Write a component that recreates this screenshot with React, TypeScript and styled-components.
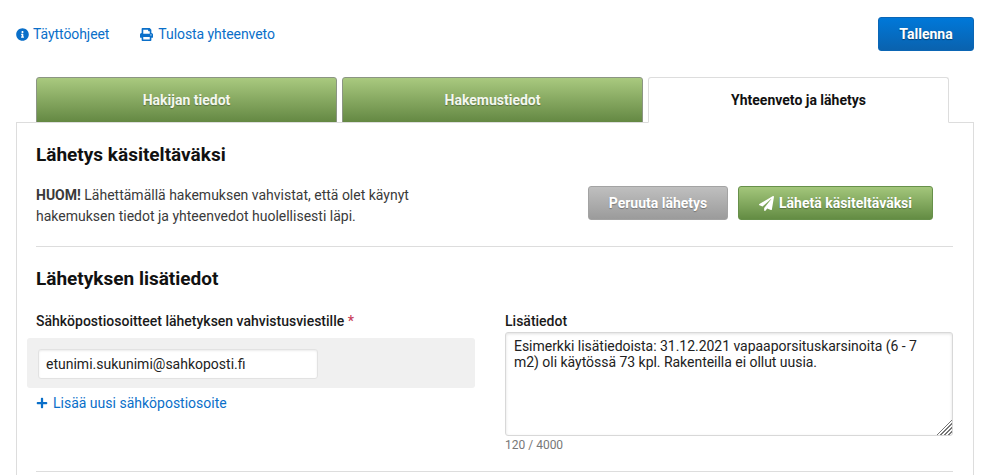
import React from "react";
import styled, { createGlobalStyle } from "styled-components";
import { FaInfoCircle, FaPaperPlane, FaPlus, FaPrint } from "react-icons/fa";

const GlobalStyle = createGlobalStyle`
  html, body {
    margin: 0;
    padding: 0;
    background: #fff;
    overflow: hidden;
  }
  body {
    font-family: Roboto, "Liberation Sans", sans-serif;
    font-size: 14px;
    color: #333;
  }
  * {
    box-sizing: border-box;
  }
`;

const Page = styled.div`
  width: 989px;
  height: 475px;
  overflow: hidden;
  padding: 17px 15px 0 16px;
`;

const TopBar = styled.div`
  display: flex;
  align-items: center;
  justify-content: space-between;
  height: 34px;
`;

const TopLinks = styled.div`
  display: flex;
  gap: 31px;
`;

const LinkItem = styled.a<{ $gap?: number }>`
  display: inline-flex;
  align-items: center;
  gap: ${(p) => p.$gap ?? 5}px;
  font-size: 14px;
  letter-spacing: -0.07px;
  color: #0a6fc9;
  text-decoration: none;
  svg {
    font-size: 13px;
  }
`;

const SaveButton = styled.button`
  width: 96px;
  height: 34px;
  border: 1px solid #0b66b5;
  border-radius: 3px;
  background: linear-gradient(#0078d9, #0a62ae);
  color: #fff;
  font: 700 14px Roboto, sans-serif;
  text-shadow: 0 1px 1px rgba(0, 0, 0, 0.4);
`;

const Tabs = styled.div`
  display: flex;
  gap: 5px;
  margin-top: 26px;
  padding-left: 20px;
`;

const Tab = styled.div<{ $active?: boolean }>`
  width: 301px;
  height: 46px;
  margin-bottom: -1px;
  position: relative;
  display: flex;
  align-items: center;
  justify-content: center;
  border-radius: 3px 3px 0 0;
  font-size: 14px;
  font-weight: 700;
  border: 1px solid ${(p) => (p.$active ? "#ddd" : "#8b9583")};
  border-bottom: ${(p) => (p.$active ? "1px solid #fff" : "1px solid #8b9583")};
  background: ${(p) =>
    p.$active ? "#fff" : "linear-gradient(#a9c97f, #648843)"};
  color: ${(p) => (p.$active ? "#111" : "#f4f7ef")};
  text-shadow: ${(p) => (p.$active ? "none" : "0 1px 1px rgba(0, 0, 0, 0.3)")};
  z-index: ${(p) => (p.$active ? 2 : 0)};
`;

const Panel = styled.div`
  position: relative;
  z-index: 1;
  border: 1px solid #ddd;
  border-bottom: none;
  padding: 21px 20px 0 19px;
  height: 360px;
`;

const Title = styled.h2`
  margin: 0;
  font-size: 19px;
  line-height: 22px;
  font-weight: 700;
  color: #111;
`;

const SendRow = styled.div`
  display: flex;
  justify-content: space-between;
  margin-top: 19px;
  padding-bottom: 15px;
  border-bottom: 1px solid #ddd;
`;

const Note = styled.p`
  margin: 0;
  width: 400px;
  font-size: 14px;
  line-height: 21px;
  color: #3a3a3a;
  padding-bottom: 4px;
  strong {
    font-weight: 700;
  }
`;

const SendActions = styled.div`
  display: flex;
  gap: 10px;
  margin-top: 1px;
  margin-right: 20px;
`;

const ActionButton = styled.button<{ $primary?: boolean }>`
  height: 34px;
  width: ${(p) => (p.$primary ? "195px" : "140px")};
  display: inline-flex;
  align-items: center;
  justify-content: center;
  gap: 5px;
  border-radius: 3px;
  border: 1px solid ${(p) => (p.$primary ? "#67904a" : "#a3a3a3")};
  background: ${(p) =>
    p.$primary
      ? "linear-gradient(#a3c67b, #638c43)"
      : "linear-gradient(#bfbfbf, #9b9b9b)"};
  color: #fff;
  font: 700 14px Roboto, sans-serif;
  text-shadow: 0 1px 1px rgba(0, 0, 0, 0.3);
  svg {
    font-size: 15px;
  }
`;

const SectionTitle = styled(Title)`
  margin-top: 21px;
`;

const Columns = styled.div`
  display: grid;
  grid-template-columns: 439px 448px;
  column-gap: 30px;
  margin-top: 22px;
  padding-bottom: 18px;
  border-bottom: 1px solid #ddd;
`;

const Column = styled.div`
  display: flex;
  flex-direction: column;
`;

const FieldLabel = styled.label`
  font-size: 14px;
  font-weight: 500;
  line-height: 18px;
  color: #1a1a1a;
`;

const Required = styled.span`
  color: #c9405a;
`;

const EmailBox = styled.div`
  margin: 8px 0 0 -9px;
  width: 448px;
  height: 50px;
  padding: 11px;
  background: #f0f0f0;
  border-radius: 3px;
`;

const EmailInput = styled.input`
  display: block;
  width: 280px;
  height: 30px;
  padding: 0 7px;
  border: 1px solid #e2e2e2;
  border-radius: 3px;
  background: #fff;
  box-shadow: inset 0 1px 2px rgba(0, 0, 0, 0.08);
  font: 14px Roboto, sans-serif;
  color: #222;
  outline: none;
`;

const AddLink = styled(LinkItem)`
  margin-top: 7px;
  line-height: 16px;
  letter-spacing: 0;
  svg {
    font-size: 12px;
  }
`;

const InfoArea = styled.textarea`
  display: block;
  width: 448px;
  height: 104px;
  margin-top: 2px;
  padding: 5px 8px;
  border: 1px solid #d8d8d8;
  border-radius: 3px;
  box-shadow: inset 0 1px 3px rgba(0, 0, 0, 0.12);
  font: 14px/16px Roboto, sans-serif;
  letter-spacing: -0.03px;
  color: #222;
  outline: none;
  &::-webkit-resizer {
    background:
      linear-gradient(135deg, #fff 50%, transparent 50%),
      repeating-linear-gradient(135deg, transparent 0 1.5px, #777 1.5px 2.8px);
  }
`;

const Counter = styled.div`
  margin-top: 2px;
  font-size: 12px;
  line-height: 15px;
  color: #777;
`;

export default function App() {
  return (
    <>
      <GlobalStyle />
      <Page>
        <TopBar>
          <TopLinks>
            <LinkItem href="#" $gap={4}>
              <FaInfoCircle />
              Täyttöohjeet
            </LinkItem>
            <LinkItem href="#">
              <FaPrint />
              Tulosta yhteenveto
            </LinkItem>
          </TopLinks>
          <SaveButton>Tallenna</SaveButton>
        </TopBar>

        <Tabs>
          <Tab>Hakijan tiedot</Tab>
          <Tab>Hakemustiedot</Tab>
          <Tab $active>Yhteenveto ja lähetys</Tab>
        </Tabs>

        <Panel>
          <Title>Lähetys käsiteltäväksi</Title>
          <SendRow>
            <Note>
              <strong>HUOM!</strong> Lähettämällä hakemuksen vahvistat, että olet
              käynyt hakemuksen tiedot ja yhteenvedot huolellisesti läpi.
            </Note>
            <SendActions>
              <ActionButton>Peruuta lähetys</ActionButton>
              <ActionButton $primary>
                <FaPaperPlane />
                Lähetä käsiteltäväksi
              </ActionButton>
            </SendActions>
          </SendRow>

          <SectionTitle>Lähetyksen lisätiedot</SectionTitle>
          <Columns>
            <Column>
              <FieldLabel>
                Sähköpostiosoitteet lähetyksen vahvistusviestille{" "}
                <Required>*</Required>
              </FieldLabel>
              <EmailBox>
                <EmailInput defaultValue="etunimi.sukunimi@sahkoposti.fi" />
              </EmailBox>
              <AddLink href="#">
                <FaPlus />
                Lisää uusi sähköpostiosoite
              </AddLink>
            </Column>
            <Column>
              <FieldLabel>Lisätiedot</FieldLabel>
              <InfoArea defaultValue="Esimerkki lisätiedoista: 31.12.2021 vapaaporsituskarsinoita (6 - 7 m2) oli käytössä 73 kpl. Rakenteilla ei ollut uusia." />
              <Counter>120 / 4000</Counter>
            </Column>
          </Columns>
        </Panel>
      </Page>
    </>
  );
}
